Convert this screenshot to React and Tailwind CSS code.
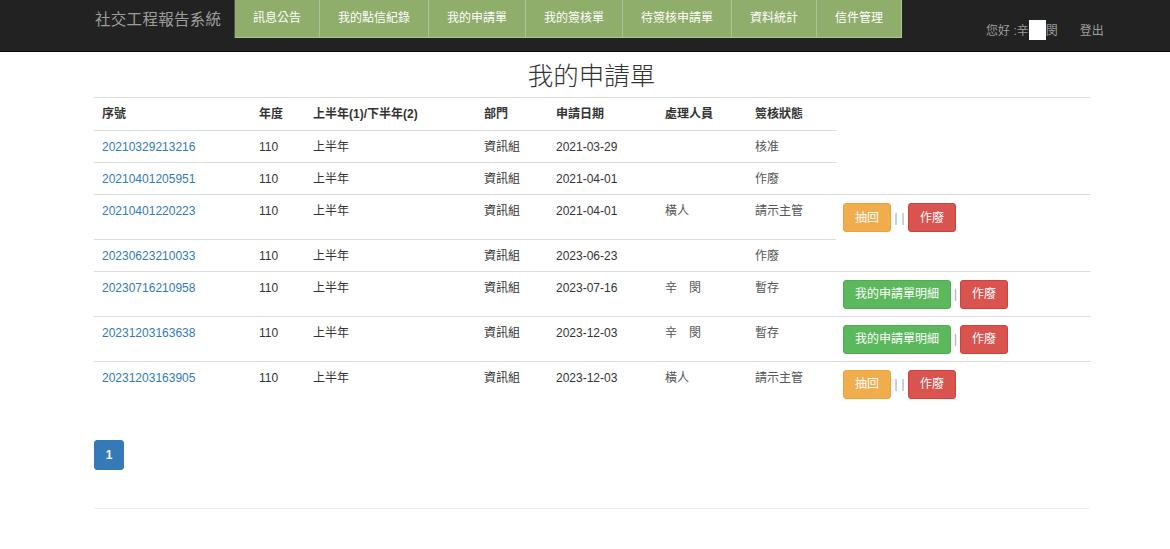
import React from 'react';

const font = { fontFamily: '"Liberation Sans", "Noto Sans CJK TC", sans-serif' };

const tabs = ['訊息公告', '我的點信紀錄', '我的申請單', '我的簽核單', '待簽核申請單', '資料統計', '信件管理'];

const rows = [
  { id: '20210329213216', dept: '資訊組', date: '2021-03-29', who: '', status: '核准', action: null },
  { id: '20210401205951', dept: '資訊組', date: '2021-04-01', who: '', status: '作廢', action: null },
  { id: '20210401220223', dept: '資訊組', date: '2021-04-01', who: '橫人', status: '請示主管', action: 'recall' },
  { id: '20230623210033', dept: '資訊組', date: '2023-06-23', who: '', status: '作廢', action: null },
  { id: '20230716210958', dept: '資訊組', date: '2023-07-16', who: '辛　閔', status: '暫存', action: 'detail' },
  { id: '20231203163638', dept: '資訊組', date: '2023-12-03', who: '辛　閔', status: '暫存', action: 'detail' },
  { id: '20231203163905', dept: '資訊組', date: '2023-12-03', who: '橫人', status: '請示主管', action: 'recall' },
];

function Btn({ color, children }) {
  return (
    <button className={`h-[29px] px-[11px] rounded-[3px] border text-[12px] leading-none text-white ${color}`}>
      {children}
    </button>
  );
}

function Actions({ type }) {
  if (type === 'recall') {
    return (
      <div className="flex items-center -ml-[1px]">
        <Btn color="bg-[#f0ad4e] border-[#eea236]">抽回</Btn>
        <span className="w-[17px] text-center text-[13px] text-[#a3b0bd]">| |</span>
        <Btn color="bg-[#d9534f] border-[#d43f3a]">作廢</Btn>
      </div>
    );
  }
  return (
    <div className="flex items-center -ml-[1px]">
      <Btn color="bg-[#5cb85c] border-[#4cae4c]">我的申請單明細</Btn>
      <span className="w-[9px] text-center text-[13px] text-[#a3b0bd]">|</span>
      <Btn color="bg-[#d9534f] border-[#d43f3a]">作廢</Btn>
    </div>
  );
}

export default function App() {
  const td = 'border-t border-[#ddd] px-2 pt-2 pb-[7px] align-top leading-[16px]';
  return (
    <div className="min-h-[549px] bg-white text-[#333] text-[12px]" style={font}>
      {/* navbar */}
      <div className="h-[52px] bg-[#222] border-b border-[#080808] flex">
        <div className="w-[234px] pl-[95px] pt-[8px] text-[15.5px] text-[#9d9d9d] tracking-[0.3px]">社交工程報告系統</div>
        <div className="flex h-[38px] border-l border-[#555]">
          {tabs.map((t) => (
            <div
              key={t}
              className="h-[38px] px-[18px] bg-[#8fad6b] border-r border-b border-[#aec496] text-white text-[12px] flex items-center pb-[2px]"
            >
              {t}
            </div>
          ))}
        </div>
        <div className="flex-1 flex items-start pt-[22px] pl-[84px] text-[12px] text-[#9d9d9d]">
          <span>您好 :辛</span>
          <span className="inline-block w-[17px] h-[20px] bg-white -mt-[2px]" />
          <span>閔</span>
          <span className="ml-[22px]">登出</span>
        </div>
      </div>

      {/* content */}
      <div className="ml-[93px] w-[997px]">
        <h2 className="text-center text-[25.5px] font-light leading-[30px] pt-[7px] pb-[8px] text-[#333]" style={{ fontFamily: '"Noto Sans CJK TC", sans-serif' }}>
          我的申請單
        </h2>
        <div className="border-t border-[#ddd] ml-[1px]">
          <table className="table-fixed border-collapse w-[997px]">
            <colgroup>
              <col className="w-[157px]" />
              <col className="w-[54px]" />
              <col className="w-[171px]" />
              <col className="w-[72px]" />
              <col className="w-[109px]" />
              <col className="w-[90px]" />
              <col className="w-[89px]" />
              <col />
            </colgroup>
            <thead>
              <tr className="text-left">
                {['序號', '年度', '上半年(1)/下半年(2)', '部門', '申請日期', '處理人員', '簽核狀態'].map((h) => (
                  <th key={h} className="px-2 pt-2 pb-[8px] font-bold leading-[16px] text-left">{h}</th>
                ))}
              </tr>
            </thead>
            <tbody>
              {rows.map((r) => (
                <tr key={r.id}>
                  <td className={td}><a className="text-[#337ab7]">{r.id}</a></td>
                  <td className={td}>110</td>
                  <td className={td}>上半年</td>
                  <td className={td}>{r.dept}</td>
                  <td className={td}>{r.date}</td>
                  <td className={`${td} text-[#555]`}>{r.who}</td>
                  <td className={`${td} text-[#555]`}>{r.status}</td>
                  {r.action && (
                    <td className={td}><Actions type={r.action} /></td>
                  )}
                </tr>
              ))}
            </tbody>
          </table>
        </div>

        <div className="mt-[34px] ml-[1px]">
          <span className="inline-flex w-[30px] h-[30px] items-center justify-center rounded-[3px] bg-[#337ab7] border border-[#337ab7] text-white text-[12px] font-bold">
            1
          </span>
        </div>
        <div className="mt-[38px] ml-[1px] border-t border-[#eee]" />
      </div>
    </div>
  );
}
